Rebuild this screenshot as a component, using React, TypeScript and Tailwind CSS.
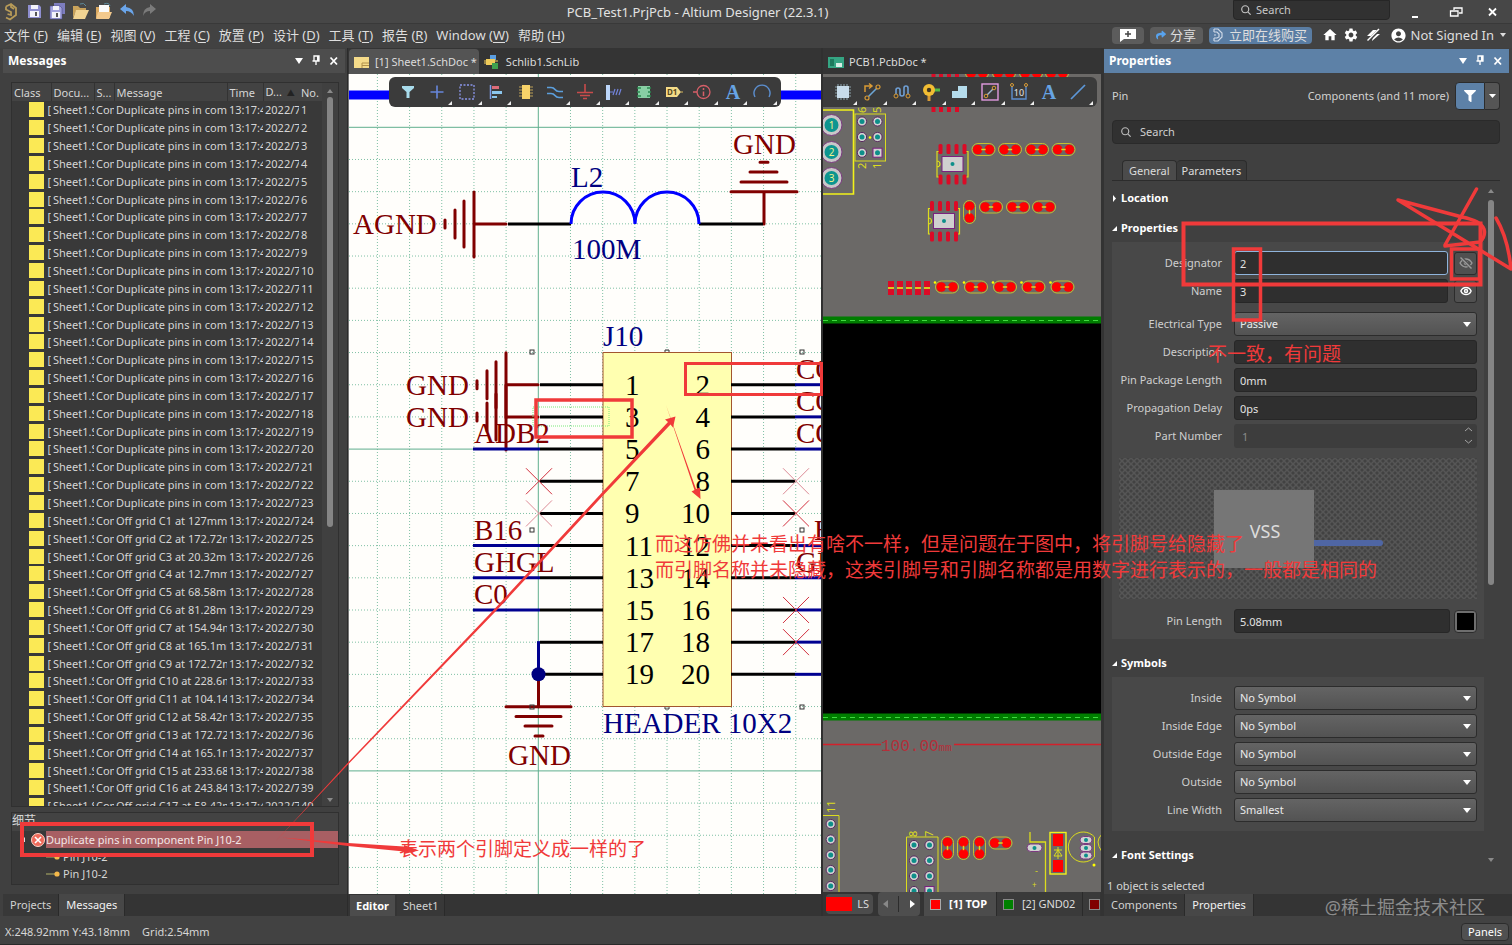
import React from "react";
import { MdHome, MdSettings, MdAccountCircle } from "react-icons/md";
import { IoSearch } from "react-icons/io5";
import { FaFilter, FaShare } from "react-icons/fa";
import { Eye } from "lucide-react";

type Message = { text: string; no: number };

const offGrid = [
  "C1 at 127mm", "C2 at 172.72mm", "C3 at 20.32mm", "C4 at 12.7mm", "C5 at 68.58mm", "C6 at 81.28mm",
  "C7 at 154.94mm", "C8 at 165.1mm", "C9 at 172.72mm", "C10 at 228.6mm", "C11 at 104.14mm", "C12 at 58.42mm",
  "C13 at 172.72mm", "C14 at 165.1mm", "C15 at 233.68mm", "C16 at 243.84mm", "C17 at 58.42mm",
];

const messages: Message[] = [
  ...Array.from({ length: 23 }, (_, i) => ({ text: "Duplicate pins in component", no: i + 1 })),
  ...offGrid.map((t, i) => ({ text: `Off grid ${t}`, no: i + 24 })),
];

/* ---------- title bar ---------- */

function TitleIcons() {
  return (
    <svg width="170" height="23" viewBox="0 0 170 23" aria-hidden="true">
      <path d="M6 6.500l5-2.500 5 4v7l-6 4.500-4-2M6 6.500v3l5 2.500v3l-3.500-1M11 4v3l3 2" fill="none" stroke="#b79b58" strokeWidth="1.800" />
      <g>
        <path d="M28 5h11l2 2v11H28z" fill="#8f8fd0" />
        <rect x="31" y="5" width="7" height="4" fill="#f2f2fa" />
        <rect x="30" y="11" width="9" height="6" fill="#f2f2fa" />
        <rect x="35" y="12" width="2" height="4" fill="#555" />
      </g>
      <g>
        <path d="M54 3h11v11H54z" fill="#7d7dbe" />
        <path d="M50 6h10l2 2v11H50z" fill="#a3a3de" stroke="#4b4b86" strokeWidth=".6" />
        <rect x="53" y="6" width="6" height="4" fill="#f2f2fa" />
        <rect x="52" y="12" width="8" height="6" fill="#f2f2fa" />
        <rect x="56" y="13" width="2" height="4" fill="#555" />
      </g>
      <path d="M73 6h5l2 2h6v3H76l-3 7z" fill="#c9a25a" />
      <path d="M76 10h13l-4 9H73z" fill="#f1d493" />
      <path d="M80 4q4-2 6 2" fill="none" stroke="#5c8a9c" />
      <path d="M96 7h14v11H96z" fill="#d9a860" />
      <path d="M99 5h10v9H99z" fill="#fafafa" />
      <path d="M98 12h14l-3 7H96z" fill="#f3c98c" />
      <path d="M104 4q5-2 6 2" fill="none" stroke="#5c8a9c" />
      <path d="M126 4l-6 5 6 5v-3q5 0 8 5 0-8-8-9z" fill="#6aa5ea" />
      <path d="M150 4l6 5-6 5v-3q-5 0-7 5 0-8 7-9z" fill="#7b7b7b" />
    </svg>
  );
}

function TitleBar() {
  return (
    <header className="flex h-[23px] items-start bg-[#474747]">
      <div className="w-[348px] shrink-0"><TitleIcons /></div>
      <h1 className="flex-1 pt-1 text-center text-[13px] leading-4 text-[#e2e2e2]">PCB_Test1.PrjPcb - Altium Designer (22.3.1)</h1>
      <div className="flex w-[465px] shrink-0 items-start">
        <label className="ml-[186px] flex h-5 w-[157px] items-center gap-1 rounded-b border border-[#262626] bg-[#313131] pl-1.5">
          <IoSearch className="size-3 text-[#c4c4c4]" />
          <input aria-label="Search commands" placeholder="Search" className="w-24 bg-transparent text-[11px] leading-4 outline-none placeholder:text-[#c8c8c8]" />
        </label>
        <div className="flex flex-1 justify-between pl-[22px] pr-3 pt-1">
          <button aria-label="Minimize" className="flex size-4 items-end pb-0.5"><span className="h-0.5 w-1.5 bg-white" /></button>
          <button aria-label="Restore" className="size-4">
            <svg viewBox="0 0 16 16" className="size-4" fill="none" stroke="#fff" strokeWidth="1.3"><path d="M6 6V4h8v5h-3M2.500 7h7.500v5H2.500z" /></svg>
          </button>
          <button aria-label="Close" className="size-4">
            <svg viewBox="0 0 16 16" className="size-4" stroke="#fff" strokeWidth="1.8"><path d="M5 4.500l7 7M12 4.500l-7 7" /></svg>
          </button>
        </div>
      </div>
    </header>
  );
}

const menus: [string, string][] = [
  ["文件", "F"], ["编辑", "E"], ["视图", "V"], ["工程", "C"], ["放置", "P"],
  ["设计", "D"], ["工具", "T"], ["报告", "R"], ["Window", "W"], ["帮助", "H"],
];

function MenuBar() {
  return (
    <nav className="flex h-[25px] items-center border-t border-[#393939] bg-[#424242] pb-0.5 pl-1 text-[13px] leading-5 text-[#dedede]">
      <div className="flex gap-[9px]">
        {menus.map(([name, key]) => (
          <button key={key} className="whitespace-nowrap">{name} (<u className="underline-offset-2">{key}</u>)</button>
        ))}
      </div>
      <div className="ml-auto flex items-center pr-1.5">
        <button aria-label="Comment" className="flex h-[17px] w-8 items-center justify-center rounded-sm bg-[#5c5c5c]">
          <svg width="18" height="14" viewBox="0 0 18 14"><path d="M1 1h16v10H5l-4 3z" fill="#fff" /><path d="M9 3v6M6 6h6" stroke="#444" strokeWidth="1.500" /></svg>
        </button>
        <button className="ml-1.5 flex h-[17px] w-[53px] items-center justify-center gap-1 rounded-sm bg-[#5c5c5c]"><FaShare className="size-2.5 text-[#58a3ee]" />分享</button>
        <button className="ml-1.5 flex h-[17px] w-[103px] items-center justify-center gap-1.5 rounded-sm bg-[#5a7da3]">
          <svg width="10" height="14" viewBox="0 0 10 14" fill="none" stroke="#cdd8e6" strokeWidth="1.200"><path d="M1 1h4l4 4v4l-4 4H1M1 4h3l2 2v3l-2 1H1M1 1v3M1 7h2M1 10v3" /></svg>
          立即在线购买
        </button>
        <MdHome className="ml-2.5 size-4 text-white" />
        <MdSettings className="ml-[5px] size-4 text-white" />
        <svg width="16" height="16" viewBox="0 0 16 16" className="ml-[7px]"><path d="M1 9l6-6h6l-3 4h4L6 14l1-5z" fill="#fff" /><path d="M2 14L14 2" stroke="#424242" strokeWidth="3" /><path d="M1.500 13.500L13 2" stroke="#fff" strokeWidth="1.500" /></svg>
        <MdAccountCircle className="ml-2 size-[17px] text-white" />
        <button className="ml-1 flex items-center gap-1.5">Not Signed In
          <svg width="6" height="4" viewBox="0 0 6 4"><path d="M0 0h6L3 4z" fill="#ddd" /></svg>
        </button>
      </div>
    </nav>
  );
}

/* ---------- shared panel parts ---------- */

function PanelHeader({ title, active }: { title: string; active?: boolean }) {
  return (
    <div className={`flex h-6 shrink-0 items-center pl-[5px] pr-1.5 text-xs font-bold leading-4 text-white ${active ? "bg-[#5d81a7]" : "bg-[#4d4d4d]"}`}>
      <h2>{title}</h2>
      <div className="ml-auto flex items-center gap-2">
        <button aria-label={`${title} menu`}><svg width="8" height="8" viewBox="0 0 8 8"><path d="M0 1h8L4 7z" fill="#fff" /></svg></button>
        <button aria-label={`Pin ${title}`}><svg width="10" height="12" viewBox="0 0 10 12"><path d="M3 1h5v5H3zM1.500 6h7M5 6v4" fill="none" stroke="#fff" strokeWidth="1.300" /><path d="M6 1h2v5H6z" fill="#fff" /></svg></button>
        <button aria-label={`Close ${title}`}><svg width="10" height="10" viewBox="0 0 10 10" stroke="#fff" strokeWidth="1.800"><path d="M1.500 1.500l6.500 7M8 1.500l-6.500 7" /></svg></button>
      </div>
    </div>
  );
}

function BottomTabs({ items }: { items: [string, boolean][] }) {
  return (
    <div className="flex h-[22px] shrink-0 bg-[#343434] text-[11px] leading-4">
      {items.map(([name, active]) => (
        <button key={name} className={`border-r border-[#2a2a2a] px-[7px] ${active ? "bg-[#474747] text-[#f2f2f2]" : "bg-[#383838] text-[#d2d2d2]"}`}>{name}</button>
      ))}
    </div>
  );
}

/* ---------- messages ---------- */

function MessagesPanel() {
  const cell = "overflow-hidden whitespace-nowrap p-0 pl-0.5 text-left font-normal";
  const head = `${cell} border-r border-[#333]`;
  return (
    <section className="flex w-[348px] shrink-0 flex-col border-r border-[#2b2b2b] bg-[#404040] pl-[3px] pt-px">
      <div className="mr-0.5 flex flex-col"><PanelHeader title="Messages" /></div>
      <div className="ml-2 mr-2 mt-[9px] flex h-[725px] shrink-0 overflow-hidden border border-[#303030] bg-[#393939] text-[11px] leading-[17px] text-[#d6d6d6]">
        <div className="flex-1 overflow-hidden">
          <table className="h-[732px] w-full table-fixed border-collapse">
            <colgroup>
              <col className="w-[39px]" /><col className="w-[43px]" /><col className="w-5" /><col className="w-[113px]" />
              <col className="w-9" /><col className="w-9" /><col />
            </colgroup>
            <thead>
              <tr className="bg-[#434343]">
                <th className={head}>Class</th>
                <th className={head}>Docu...</th>
                <th className={head}>S...</th>
                <th className={head}>Message</th>
                <th className={head}>Time</th>
                <th className={cell}>D... <span className="ml-0.5 text-[8px] text-[#222]">▲</span></th>
                <th className={cell}>No.</th>
              </tr>
            </thead>
            <tbody>
              {messages.map((m) => (
                <tr key={m.no}>
                  <td className={cell}>
                    <span className="flex items-center justify-end gap-[3px]"><i className="size-[15px] bg-[#fbe955]" />[</span>
                  </td>
                  <td className={cell}>Sheet1.S</td>
                  <td className={cell}>Com</td>
                  <td className={cell}>{m.text}</td>
                  <td className={cell}>13:17:4</td>
                  <td className={cell}>2022/7</td>
                  <td className={cell}>{m.no}</td>
                </tr>
              ))}
            </tbody>
          </table>
        </div>
        <div className="flex w-4 shrink-0 flex-col items-center bg-[#404040] pb-1 pt-1.5">
          <svg width="6" height="4" viewBox="0 0 6 4"><path d="M0 4h6L3 0z" fill="#8a8a8a" /></svg>
          <div className="mt-1 h-[430px] w-1.5 rounded-full bg-[#858585]" />
          <svg className="mt-auto" width="6" height="4" viewBox="0 0 6 4"><path d="M0 0h6L3 4z" fill="#8a8a8a" /></svg>
        </div>
      </div>
      <div className="ml-2 mr-2 mt-[5px] h-[73px] shrink-0 border border-[#303030] bg-[#393939] text-[11px] leading-[17px] text-[#d6d6d6]">
        <h3 className="h-[18px] bg-[#434343] text-xs">细节</h3>
        <ul>
          <li>
            <div className="flex">
              <span className="flex w-[34px] items-center gap-1.5 pl-2">
                <svg width="5" height="5" viewBox="0 0 5 5"><path d="M5 0v5H0z" fill="#ddd" /></svg>
                <svg width="14" height="14" viewBox="0 0 14 14"><circle cx="7" cy="7" r="6.500" fill="#ee6a5a" stroke="#ffd2c8" /><path d="M4 4l6 6M10 4l-6 6" stroke="#fff" strokeWidth="1.600" /></svg>
              </span>
              <span className="flex-1 bg-[#a85f63] text-[#f2e6e6]">Duplicate pins in component Pin J10-2</span>
            </div>
            <ul>
              {[1, 2].map((n) => (
                <li key={n} className="flex items-center gap-[3px] pl-[34px]">
                  <svg width="14" height="6" viewBox="0 0 14 6"><path d="M0 3h9" stroke="#8a8a58" strokeWidth="1.500" /><circle cx="11" cy="3" r="2.600" fill="#f5b84a" /></svg>
                  Pin J10-2
                </li>
              ))}
            </ul>
          </li>
        </ul>
      </div>
      <div className="mt-auto"><BottomTabs items={[["Projects", false], ["Messages", true]]} /></div>
    </section>
  );
}

/* ---------- floating tool bars ---------- */

function ToolButton({ label, corner, children }: { label: string; corner?: boolean; children: React.ReactNode }) {
  return (
    <button aria-label={label} className="relative flex h-[30px] flex-1 items-center justify-center">
      <svg width="20" height="20" viewBox="0 0 20 20" fill="none">{children}</svg>
      {corner && <svg className="absolute bottom-0.5 right-0" width="4" height="4" viewBox="0 0 4 4"><path d="M4 0v4H0z" fill="#eee" /></svg>}
    </button>
  );
}

function SchematicTools() {
  return (
    <div className="absolute left-10 top-[3px] flex h-[30px] w-[392px] rounded-md bg-[#3b3b3b] px-1">
      <ToolButton label="Filter"><path d="M4 4h12v2l-4.500 4v6h-3v-6L4 6z" fill="#a9dcec" /></ToolButton>
      <ToolButton label="Move" corner><path d="M10 3.500v13M3.500 10h13" stroke="#6787dc" strokeWidth="1.600" /></ToolButton>
      <ToolButton label="Select area" corner><rect x="3" y="3" width="14" height="14" stroke="#8b96ea" strokeWidth="1.300" strokeDasharray="2 1.500" /></ToolButton>
      <ToolButton label="Align" corner><path d="M4.500 3v14" stroke="#7d9ce8" strokeWidth="1.500" /><rect x="6" y="4" width="7" height="3" fill="#dd6b78" /><rect x="6" y="9" width="10" height="3" fill="#8bc6ee" /><rect x="6" y="14" width="5" height="2" fill="#8bc6ee" /></ToolButton>
      <ToolButton label="Place part"><path d="M3 5h14M3 8h14M3 11h14M3 14h14" stroke="#bba057" strokeWidth="1.200" /><rect x="6" y="3" width="8" height="14" fill="#f7d269" /></ToolButton>
      <ToolButton label="Wire" corner><path d="M2 5.500h4q2.500 0 4 2t4 2h4M2 11.500h4q2.500 0 4 2t4 2h4" stroke="#5c9fdc" strokeWidth="1.700" /></ToolButton>
      <ToolButton label="Power port" corner><path d="M10 2v8M2 10.500h16M5 13.500h10M8 16.500h4" stroke="#c84b4b" strokeWidth="1.600" /></ToolButton>
      <ToolButton label="Harness" corner><rect x="2" y="3" width="4" height="15" fill="#bcd6fa" /><path d="M6 10h3M9 13l2-6M12 13l2-6M15 13l2-6" stroke="#7384dd" strokeWidth="1.200" /></ToolButton>
      <ToolButton label="Sheet symbol" corner><rect x="4" y="4" width="12" height="12" fill="#88cfa4" /><path d="M3 6h4M3 10h3M3 14h4M13 6h4M14 10h3M13 14h4" stroke="#2b8a50" strokeWidth="1.500" /></ToolButton>
      <ToolButton label="Port" corner><path d="M2 5h11l4 5-4 5H2z" fill="#f5dc88" /><text x="3" y="13" fontSize="8" fontWeight="bold" fill="#5a4a1c">D1</text><path d="M17 10h2" stroke="#d8b95c" /></ToolButton>
      <ToolButton label="Directive" corner><circle cx="10.500" cy="10" r="6.500" stroke="#d65f68" strokeWidth="1.300" /><path d="M0 10h4M10.500 6v2M10.500 9.500V14" stroke="#d65f68" strokeWidth="1.500" /></ToolButton>
      <ToolButton label="Text" corner><text x="10" y="17" textAnchor="middle" fontFamily="Liberation Serif" fontWeight="bold" fontSize="20" fill="#67a4e4">A</text></ToolButton>
      <ToolButton label="Arc" corner><path d="M3 15A8 8 0 1 1 17 15" stroke="#5c8fd0" strokeWidth="1.400" /></ToolButton>
    </div>
  );
}

function PcbTools() {
  return (
    <div className="absolute left-0 top-[3px] flex h-[30px] w-[274px] rounded-r-md bg-[#3b3b3b] pl-[5px] pr-1">
      <ToolButton label="Place component" corner><path d="M5 2v16M8 2v16M11 2v16M14 2v16M2 5h16M2 8h16M2 11h16M2 14h16" stroke="#8aa0a8" strokeWidth="1.100" /><rect x="4" y="4" width="12" height="12" fill="#c8dcea" /></ToolButton>
      <ToolButton label="Route" corner><path d="M3 10V4h6M7 1.500L10 4 7 6.500" stroke="#d99b35" strokeWidth="1.500" /><path d="M6.500 14.500l8-8" stroke="#6da6d6" strokeWidth="1.600" /><circle cx="5" cy="16" r="2" stroke="#d99b35" strokeWidth="1.200" /><circle cx="16" cy="5" r="2" stroke="#d99b35" strokeWidth="1.200" /></ToolButton>
      <ToolButton label="Tune length" corner><path d="M4 12V8a2 2 0 0 1 4 0v4a2 2 0 0 0 4 0V6a2 2 0 0 1 4 0v6" stroke="#6f9fd4" strokeWidth="1.600" /><circle cx="4" cy="14" r="2" stroke="#d99b35" /><circle cx="16" cy="14" r="2" stroke="#d99b35" /></ToolButton>
      <ToolButton label="Place via" corner><path d="M11 8h8" stroke="#55bb44" strokeWidth="3" /><path d="M8 11v8" stroke="#d99b35" strokeWidth="3" /><circle cx="8" cy="8" r="6" fill="#f2bd33" /><circle cx="8" cy="8" r="2.200" fill="#443820" /></ToolButton>
      <ToolButton label="Polygon" corner><path d="M2 9h6V4h9v12H2z" fill="#b5dcec" /></ToolButton>
      <ToolButton label="Keep-out" corner><rect x="2" y="2" width="16" height="16" stroke="#e29be0" strokeWidth="1.400" /><path d="M7 13l6-6" stroke="#9fb5d0" strokeWidth="1.500" /><circle cx="6" cy="14" r="1.800" stroke="#d99b35" /><circle cx="14" cy="6" r="1.800" stroke="#d99b35" /></ToolButton>
      <ToolButton label="Dimension" corner><path d="M3 4v13h14V4" stroke="#5d8fd0" strokeWidth="1.400" /><circle cx="3" cy="3" r="1.500" stroke="#d99b35" /><circle cx="17" cy="3" r="1.500" stroke="#d99b35" /><text x="10" y="14" textAnchor="middle" fontSize="9" fill="#e6e6e6">10</text></ToolButton>
      <ToolButton label="String"><text x="10" y="17" textAnchor="middle" fontFamily="Liberation Serif" fontWeight="bold" fontSize="20" fill="#67a4e4">A</text></ToolButton>
      <ToolButton label="Line" corner><path d="M3 17L17 3" stroke="#5d97d8" strokeWidth="1.700" /></ToolButton>
    </div>
  );
}

/* ---------- schematic ---------- */

const GX = 538.3, GY = 127.3, STEP = 32.18;
const rowY = (i: number) => 384.7 + STEP * i;

function Cross({ x, y, faint }: { x: number; y: number; faint?: boolean }) {
  return <path d={`M${x - 13} ${y - 13}l26 26M${x + 13} ${y - 13}l-26 26`} stroke={faint ? "#dc8b96" : "#d2303e"} strokeWidth="1" />;
}

function SideGround({ x, y }: { x: number; y: number }) {
  return <path d={`M${x} ${y - 32}v65M${x - 10} ${y - 23}v46M${x - 19} ${y - 14}v28M${x - 29} ${y - 4}v8M${x} ${y}h32`} stroke="#800000" strokeWidth="3" strokeLinecap="round" />;
}

function SchematicDrawing() {
  const cols = Array.from({ length: 60 }, (_, i) => i - 6);
  const rows = Array.from({ length: 60 }, (_, i) => i - 2);
  const netsRight: [string, number, number][] = [["CO", 796, 0], ["CO", 796, 1], ["CO", 796, 2], ["B1", 814, 5], ["GH", 796, 6]];
  return (
    <svg className="block size-full bg-[#fffefb]" aria-label="Schematic sheet">
      <g transform="translate(-349 -74)" fill="none">
        {cols.map((i) => (
          <path key={`c${i}`} d={`M${GX + STEP * i} 74V2000`} stroke={i % 10 === 0 ? "#5fae8e" : "#7fc0a4"} strokeDasharray={i % 10 === 0 ? undefined : "1 2"} />
        ))}
        {rows.map((i) => (
          <path key={`r${i}`} d={`M349 ${GY + STEP * i}H2400`} stroke={i % 10 === 0 ? "#5fae8e" : "#7fc0a4"} strokeDasharray={i % 10 === 0 ? undefined : "1 2"} />
        ))}
        <path d="M349 95H2400" stroke="#0000ff" strokeWidth="9" />
        <SideGround x={474} y={224} />
        <path d="M764 224v-32M731 191.700h66M741 182h46M750 172h27M760 162.300h8" stroke="#800000" strokeWidth="3" strokeLinecap="round" />
        <path d="M508 224h63M699 224h64" stroke="#000" strokeWidth="3" />
        <path d="M571 224a32 32 0 0 1 64 0a32 32 0 0 1 64 0" stroke="#0000ff" strokeWidth="3" />
        <rect x="603" y="352.500" width="128.500" height="354" fill="#ffffb0" stroke="#a2552f" />
        <SideGround x={506} y={rowY(0)} />
        <SideGround x={506} y={rowY(1)} />
        {Array.from({ length: 10 }, (_, i) => (
          <path key={i} d={`M540 ${rowY(i)}h63M731 ${rowY(i)}h64`} stroke="#000" strokeWidth="3" />
        ))}
        {[2, 5, 6, 7].map((i) => <path key={i} d={`M473 ${rowY(i)}h67`} stroke="#000090" strokeWidth="3" />)}
        {[0, 1, 2, 5, 6, 7, 8, 9].map((i) => <path key={i} d={`M795 ${rowY(i)}h26`} stroke="#000090" strokeWidth="3" />)}
        <path d={`M538.500 ${rowY(8) - 1}V${rowY(9)}`} stroke="#000090" strokeWidth="3" />
        <path d="M538.500 680v27M506 706.700h65M516 716.500h45M525 726h27M535 736h8" stroke="#800000" strokeWidth="3" strokeLinecap="round" />
        <circle cx="538.500" cy={rowY(9)} r="7" fill="#000080" />
        <Cross x={539} y={rowY(3)} /><Cross x={539} y={rowY(4)} faint />
        <Cross x={796} y={rowY(3)} faint /><Cross x={796} y={rowY(4)} />
        <Cross x={796} y={rowY(7)} /><Cross x={796} y={rowY(8)} />
        {[[532, 352], [802, 352], [532, 530], [802, 530], [532, 707], [802, 707]].map(([x, y]) => (
          <rect key={`${x}-${y}`} x={x - 2} y={y - 2} width="4" height="4" stroke="#333" />
        ))}
        <path d="M665 352v-2h4v2M665 707v2h4v-2" stroke="#333" />
        <rect x="533" y="407" width="76" height="19" stroke="#7bea7b" strokeDasharray="1 1" />
        <g fontFamily="Liberation Serif" fontSize="29">
          <g fill="#800000">
            <text x="353" y="234">AGND</text>
            <text x="733" y="154">GND</text>
            <text x="406" y="395">GND</text>
            <text x="406" y="427">GND</text>
            <text x="474" y="443">ADB2</text>
            <text x="474" y="540">B16</text>
            <text x="474" y="572">GHGL</text>
            <text x="474" y="604">C0</text>
            <text x="508" y="765">GND</text>
            {netsRight.map(([t, x, i]) => <text key={i} x={x} y={rowY(i) - 6}>{t}</text>)}
          </g>
          <g fill="#000080">
            <text x="571" y="187">L2</text>
            <text x="572" y="259">100M</text>
            <text x="603" y="346">J10</text>
            <text x="603" y="733">HEADER 10X2</text>
          </g>
          <g fill="#000">
            {Array.from({ length: 10 }, (_, i) => (
              <g key={i}>
                <text x="625" y={rowY(i) + 10}>{2 * i + 1}</text>
                <text x="710" y={rowY(i) + 10} textAnchor="end">{2 * i + 2}</text>
              </g>
            ))}
          </g>
        </g>
      </g>
    </svg>
  );
}

function DocTab({ active, label, children }: { active?: boolean; label: string; children: React.ReactNode }) {
  return (
    <button className={`flex h-[25px] items-center gap-1 whitespace-nowrap rounded-t pl-1 pr-0.5 text-[11px] leading-4 text-[#dcdcdc] ${active ? "bg-[#545454]" : ""}`}>
      <svg width="18" height="16" viewBox="0 0 18 16">{children}</svg>
      {label}
    </button>
  );
}

function SchematicPane() {
  return (
    <section className="flex min-w-0 flex-1 flex-col border-r-2 border-[#303030]">
      <div className="flex h-[26px] shrink-0 items-end gap-px bg-[#343434] pl-px">
        <DocTab active label="[1] Sheet1.SchDoc *"><path d="M1 3h15v11H1z" fill="#f5db8a" /><path d="M9 9h7M9 11.500h7M9 9v5" stroke="#b0904a" /></DocTab>
        <DocTab label="Schlib1.SchLib"><path d="M6 1h6v5H6z" fill="#5a9de0" /><path d="M2 5h9v6H2z" fill="#f0cb5a" /><path d="M8 9h6v6H8z" fill="#3fa04e" /><path d="M0 7h2M0 9h2M11 7h3" stroke="#f0cb5a" /></DocTab>
      </div>
      <div className="relative min-h-0 flex-1 overflow-hidden border-l border-[#777]">
        <SchematicDrawing />
        <SchematicTools />
      </div>
      <div className="flex h-[22px] shrink-0 bg-[#343434] pl-0.5 pt-px text-[11px] leading-4">
        <button className="mr-0.5 bg-[#4c4c4c] px-1.5 font-bold text-white">Editor</button>
        <button className="border-r border-[#2a2a2a] bg-[#383838] px-1.5 text-[#d2d2d2]">Sheet1</button>
      </div>
    </section>
  );
}

/* ---------- board ---------- */

const YEL = "#dcdc1e";

function Chip({ x, y, vertical }: { x: number; y: number; vertical?: boolean }) {
  return (
    <g transform={`translate(${x} ${y}) rotate(${vertical ? 90 : 0})`}>
      <rect x="-11.500" y="-6" width="23" height="12" rx="6" stroke="#cfc82c" strokeWidth=".9" />
      <ellipse cx="-5.800" rx="4.800" ry="4.800" fill="#ff0000" />
      <ellipse cx="5.800" rx="4.800" ry="4.800" fill="#ff0000" />
      <path d="M-2.200 0h4.400" stroke={YEL} strokeWidth="1.500" />
    </g>
  );
}

function Ic({ x, y }: { x: number; y: number }) {
  return (
    <g transform={`translate(${x} ${y})`}>
      {[-12, -4, 4, 12].map((d) => (
        <g key={d} fill="#dc0a26"><rect x={d - 2} y="-20" width="4" height="10" rx="1.500" /><rect x={d - 2} y="10.500" width="4" height="10" rx="1.500" /></g>
      ))}
      <path d="M-14 -12.500h-1.500v25.500h1.500M14 -12.500h1.500v25.500h-1.500M-15.500 -3a3 3 0 0 1 0 6" stroke={YEL} strokeWidth="1.200" />
      <rect x="-10.500" y="-7.500" width="21" height="15" fill="#cfcfcf" stroke="#7b2080" />
      <circle r="2" fill="#0d8f8a" />
    </g>
  );
}

function Pad({ x, y, square }: { x: number; y: number; square?: boolean }) {
  return (
    <g transform={`translate(${x} ${y})`}>
      {square ? <rect x="-4.500" y="-4.500" width="9" height="9" fill="#d2d2d2" stroke="#7b2080" /> : <circle r="4.600" fill="#d2d2d2" stroke="#5a2a60" />}
      <circle r="2.500" fill="#0d8f8a" />
    </g>
  );
}

function BoardDrawing() {
  return (
    <svg className="block size-full bg-[#6b6967]" aria-label="Board layout">
      <g transform="translate(-823 -74)" fill="none">
        {[977, 1004, 1031, 1057].map((x) => <Chip key={x} x={x} y={73} />)}
        {[933.500, 941, 949, 957].map((x) => <path key={x} d={`M${x} 70v8M${x} 104v8`} stroke="#dc0a26" strokeWidth="4" />)}
        <path d="M820 110h33.500v84H820" stroke="#f2f21a" strokeWidth="1.600" />
        {[[125, "1"], [152, "2"], [178, "3"]].map(([y, n]) => (
          <g key={n}>
            <circle cx="831.500" cy={y} r="10.500" fill="#c8c8c8" stroke="#7b3a80" />
            <circle cx="831.500" cy={y} r="7" fill="#0d9590" />
            <text x="831.500" y={Number(y) + 4} textAnchor="middle" fontSize="10" fill="#f2f28a">{n}</text>
          </g>
        ))}
        <rect x="855" y="114" width="30.500" height="47" stroke={YEL} />
        {[121.500, 137, 152.700].map((y) => <Pad key={y} x={862} y={y} />)}
        <Pad x={877.500} y={121.500} /><Pad x={877.500} y={137} /><Pad x={877.500} y={152.700} square />
        <circle cx="870" cy="137.500" r="1.300" fill="#ffff00" />
        <g fill={YEL} fontSize="11">
          <text transform="translate(866 169) rotate(-90)">2</text>
          <text transform="translate(881 169) rotate(-90)">1</text>
          <text transform="translate(866 113) rotate(-90)">6</text>
          <text transform="translate(881 113) rotate(-90)">5</text>
          <text transform="translate(835 813) rotate(-90)">11</text>
          <text transform="translate(917 837) rotate(-90)">8</text>
          <text transform="translate(933 837) rotate(-90)">7</text>
          <text x="1032" y="888" fontSize="8">+</text>
          <text x="1035" y="874" fontSize="9">-</text>
        </g>
        <Ic x={952.500} y={164} /><Ic x={944} y={221} />
        {[983.500, 1010, 1037, 1063.500].map((x) => <Chip key={x} x={x} y={149.500} />)}
        {[991, 1018, 1044].map((x) => <Chip key={x} x={x} y={207} />)}
        <Chip x={969.500} y={212} vertical />
        {[891, 900, 909, 918, 927].map((x) => (
          <g key={x}><rect x={x - 3} y="281" width="6" height="14" fill="#dc0a26" /><path d={`M${x - 3} 288h6`} stroke={YEL} strokeWidth="1.800" /></g>
        ))}
        {[947, 976, 1005, 1033.500, 1062.500].map((x) => (
          <g key={x}><Chip x={x} y={287} /><circle cx={x - 12} cy="282.500" r="1.300" fill="#ffff00" /></g>
        ))}
        <rect x="823" y="320" width="1200" height="397" fill="#000" />
        <path d="M823 320h1200M823 717h1200" stroke="#007d00" strokeWidth="7" />
        <path d="M823 320.500h1200M823 717.500h1200" stroke="#3fd83f" strokeDasharray="5 4" />
        <path d="M823 744.500h58M954 744.500h1200" stroke="#d3202b" strokeWidth="1.500" />
        <text x="881" y="751" fontFamily="Liberation Mono" fontSize="16" fill="#b3303a">100.00<tspan fontSize="11">mm</tspan></text>
        <path d="M823 815.500h16V900M906.500 900v-63h31.500V900" stroke={YEL} />
        {[824, 839.500, 855, 870, 886].map((y) => <Pad key={y} x={830.700} y={y} />)}
        {[845, 860.500, 876, 891].map((y) => <g key={y}><Pad x={914} y={y} /><Pad x={929.500} y={y} square={y === 891} /></g>)}
        {[947.500, 963.500, 979.500].map((x) => <Chip key={x} x={x} y={848} vertical />)}
        <Chip x={1000.500} y={843} />
        <path d="M1030 832v10h15.500v58" stroke={YEL} strokeWidth="1.300" />
        <rect x="1027" y="844" width="15" height="7.500" rx="3.700" fill="#d2d2d2" stroke="#7b3a80" /><circle cx="1034.500" cy="848" r="2" fill="#0d8f8a" />
        <rect x="1050" y="832.500" width="16" height="41.500" stroke="#f2f21a" strokeWidth="1.400" />
        <path d="M1053 834h10v12h-10zM1053 860h10v12h-10z" fill="#ff0000" />
        <path d="M1058 847v12M1054 850h8M1058 850l-4 6h8z" stroke={YEL} />
        <path d="M1094.500 837v20a15 15 0 1 1 0-20z" stroke={YEL} />
        {[840, 848, 855.500].map((y) => <g key={y}><rect x="1080" y={y - 3.500} width="12" height="7" rx="3.500" fill="#d2d2d2" stroke="#7b3a80" /><circle cx="1086" cy={y} r="2" fill="#0d8f8a" /></g>)}
        <circle cx="1094" cy="865" r="1.500" fill="#ffff00" />
        <path d="M1102 834q-4 4-4 8t4 10" stroke={YEL} />
      </g>
    </svg>
  );
}

function BoardPane() {
  return (
    <section className="flex w-[278px] shrink-0 flex-col">
      <div className="flex h-[26px] shrink-0 items-end bg-[#343434]">
        <DocTab label="PCB1.PcbDoc *"><path d="M1 3h16v11H1z" fill="#35a583" /><path d="M3 5h4v7H3z" fill="#1c7a5d" /><path d="M9 9h6v4H9z" fill="#d8eee6" /></DocTab>
      </div>
      <div className="relative min-h-0 flex-1 overflow-hidden">
        <BoardDrawing />
        <PcbTools />
      </div>
      <div className="flex h-6 shrink-0 overflow-hidden bg-[#343434] text-[11px] leading-4 text-[#dcdcdc]">
        <button className="my-0.5 ml-[3px] flex w-[47px] items-center justify-between rounded bg-[#4c4c4c] pr-1"><span className="h-[14px] w-[26px] bg-[#ff0000]" />LS</button>
        <div className="ml-[5px] mr-1 flex w-[42px] items-center justify-around rounded bg-[#4e4e4e]">
          <button aria-label="Previous layer"><svg width="5" height="8" viewBox="0 0 5 8"><path d="M5 0v8L0 4z" fill="#888" /></svg></button>
          <span className="h-4 w-px bg-[#2c2c2c]" />
          <button aria-label="Next layer"><svg width="5" height="8" viewBox="0 0 5 8"><path d="M0 0v8l5-4z" fill="#fff" /></svg></button>
        </div>
        <button className="flex w-[72px] shrink-0 items-center gap-2 whitespace-nowrap bg-[#4c4c4c] pl-1.5 font-bold text-white"><i className="size-[11px] border border-[#aaa] bg-[#ff0000]" />[1] TOP</button>
        <button className="flex w-[87px] shrink-0 items-center gap-2 whitespace-nowrap border-x border-[#2a2a2a] bg-[#3a3a3a] pl-1.5"><i className="size-[11px] border border-[#888] bg-[#008000]" />[2] GND02</button>
        <button aria-label="Next layer tab" className="flex items-center bg-[#3a3a3a] pl-1.5"><i className="size-[11px] border border-[#888] bg-[#800000]" /></button>
      </div>
    </section>
  );
}

/* ---------- properties ---------- */

const boxCls = "h-6 min-w-0 flex-1 rounded-[3px] border bg-[#2f2f2f] px-[5px] text-[11px] leading-4 text-[#e2e2e2] outline-none";

function Field({ label, id, children }: { label: string; id: string; children: React.ReactNode }) {
  return (
    <div className="flex h-6 items-center">
      <label htmlFor={id} className="w-[110px] shrink-0 text-right text-[11px] leading-4 text-[#cfcfcf]">{label}</label>
      <div className="ml-3 flex min-w-0 flex-1 items-center">{children}</div>
    </div>
  );
}

function Dropdown({ label, value }: { label: string; value: string }) {
  const id = label.toLowerCase().replace(/ /g, "-");
  return (
    <Field label={label} id={id}>
      <div className="relative flex-1">
        <select id={id} defaultValue={value} className="block h-6 w-full appearance-none rounded-[3px] border border-[#2c2c2c] bg-gradient-to-b from-[#646464] to-[#535353] px-[5px] text-[11px] leading-4 text-[#ebebeb] outline-none">
          <option>{value}</option>
        </select>
        <svg className="pointer-events-none absolute right-1.5 top-2.5" width="8" height="5" viewBox="0 0 8 5"><path d="M0 0h8L4 5z" fill="#fff" /></svg>
      </div>
    </Field>
  );
}

function Heading({ title, open }: { title: string; open?: boolean }) {
  return (
    <h3 className="flex h-[18px] items-center gap-1 text-[11px] font-bold leading-4 text-white">
      <svg width="5" height="7" viewBox="0 0 5 7"><path d={open ? "M5 1v5H0z" : "M1 0l3 3.500L1 7z"} fill="#fff" /></svg>
      {title}
    </h3>
  );
}

function PinPreview() {
  return (
    <svg className="mx-[7px] mt-[10px] h-[141px] w-[358px]" aria-label="Pin preview">
      <defs>
        <pattern id="hatch" width="6" height="6" patternUnits="userSpaceOnUse">
          <rect width="6" height="6" fill="#424242" />
          <path d="M-1 -1l8 8M7 -1l-8 8" stroke="#565656" strokeWidth="1.500" />
        </pattern>
      </defs>
      <rect width="100%" height="100%" fill="url(#hatch)" />
      <rect x="95" y="32" width="100" height="78" fill="#767676" />
      <path d="M195 85h66" stroke="#4f66a4" strokeWidth="6" />
      <circle cx="261" cy="85" r="3" fill="#4f66a4" />
      <text x="146" y="80" textAnchor="middle" fontSize="18" fill="#dcdcdc">VSS</text>
    </svg>
  );
}

function PropertiesPanel() {
  return (
    <section className="flex w-[411px] shrink-0 flex-col border-l-[3px] border-[#333] bg-[#404040] pt-px">
      <div className="mr-[3px] flex flex-col"><PanelHeader title="Properties" active /></div>
      <div className="mr-3 mt-[9px] flex h-7 shrink-0 items-center pl-2 text-[11px] leading-4 text-[#d2d2d2]">
        Pin
        <span className="ml-auto mr-1.5">Components (and 11 more)</span>
        <button aria-label="Filter objects" className="flex h-7 w-[30px] items-center justify-center rounded-l border border-[#2c2c2c] bg-[#5d81a7]"><FaFilter className="size-3 text-white" /></button>
        <button aria-label="Filter options" className="flex h-7 w-[15px] items-center justify-center rounded-r border border-l-0 border-[#2c2c2c] bg-[#555]"><svg width="7" height="4" viewBox="0 0 7 4"><path d="M0 0h7L3.500 4z" fill="#fff" /></svg></button>
      </div>
      <label className="ml-2 mr-3 mt-[10px] flex h-6 shrink-0 items-center gap-2 rounded border border-[#2a2a2a] bg-[#313131] pl-[7px]">
        <IoSearch className="size-3 text-[#bbb]" />
        <input aria-label="Search properties" placeholder="Search" className="flex-1 bg-transparent text-[11px] leading-4 outline-none placeholder:text-[#cfcfcf]" />
      </label>
      <div className="ml-2 mr-3 mt-4 flex h-[21px] shrink-0 border-b border-[#2c2c2c] pl-2.5 text-[11px] leading-4 text-[#dcdcdc]">
        <button className="rounded-t border border-b-0 border-[#2c2c2c] bg-[#4b4b4b] px-1.5">General</button>
        <button className="rounded-t border border-b-0 border-l-0 border-[#2c2c2c] bg-[#3a3a3a] px-[5px]">Parameters</button>
      </div>
      <div className="flex min-h-0 flex-1">
        <div className="ml-2 w-[372px] shrink-0 pt-2">
          <Heading title="Location" />
          <div className="mt-3"><Heading title="Properties" open /></div>
          <div className="mt-[5px] bg-[#484848] pb-1.5 pt-[9px]">
            <div className="flex flex-col gap-1 pr-[7px]">
              <Field label="Designator" id="designator">
                <input id="designator" defaultValue="2" className={`${boxCls} mr-1.5 border-[#8fb4dc]`} />
                <button aria-label="Show designator" className="flex size-[23px] items-center justify-center rounded-[3px] border border-[#2c2c2c] bg-[#505050]">
                  <svg width="14" height="14" viewBox="0 0 14 14" fill="none" stroke="#9a9a9a"><path d="M1 7q2.500-4 6-4t6 4q-2.500 4-6 4T1 7z" strokeWidth="1.400" /><circle cx="7" cy="7" r="1.800" fill="#9a9a9a" /><path d="M2 1l11 12" stroke="#505050" strokeWidth="3" /><path d="M1.500 1.500l11 11" strokeWidth="1.400" /></svg>
                </button>
              </Field>
              <Field label="Name" id="name">
                <input id="name" defaultValue="3" className={`${boxCls} mr-1.5 border-[#272727]`} />
                <button aria-label="Hide name" className="flex size-[23px] items-center justify-center rounded-[3px] border border-[#2c2c2c] bg-[#505050] text-white"><Eye className="size-3" strokeWidth={3} /></button>
              </Field>
            </div>
            <div className="mt-[9px] flex flex-col gap-1 pr-[7px]">
              <Dropdown label="Electrical Type" value="Passive" />
              <Field label="Description" id="description"><input id="description" className={`${boxCls} border-[#272727]`} /></Field>
              <Field label="Pin Package Length" id="ppl"><input id="ppl" defaultValue="0mm" className={`${boxCls} border-[#272727]`} /></Field>
              <Field label="Propagation Delay" id="delay"><input id="delay" defaultValue="0ps" className={`${boxCls} border-[#272727]`} /></Field>
              <Field label="Part Number" id="part">
                <div className="relative flex flex-1">
                  <input id="part" defaultValue="1" disabled className="h-6 min-w-0 flex-1 rounded-[3px] bg-[#3d3d3d] px-2 text-[11px] leading-4 text-[#8a8a8a]" />
                  <svg className="absolute right-1 top-0.5" width="9" height="20" viewBox="0 0 9 20" fill="none" stroke="#a5a5a5"><path d="M1 5l3.500-3L8 5M1 14l3.500 3L8 14" /></svg>
                </div>
              </Field>
            </div>
            <PinPreview />
            <div className="mt-[10px] pr-[7px]">
              <Field label="Pin Length" id="pinlen">
                <input id="pinlen" defaultValue="5.08mm" className={`${boxCls} mr-1 border-[#272727]`} />
                <button aria-label="Pin colour" className="size-[23px] rounded border border-[#2c2c2c] bg-[#6e6e6e] p-0.5"><span className="block size-full bg-black" /></button>
              </Field>
            </div>
          </div>
          <div className="mt-[15px]"><Heading title="Symbols" open /></div>
          <div className="mt-[5px] flex flex-col gap-1 bg-[#484848] pb-[9px] pr-[7px] pt-[9px]">
            <Dropdown label="Inside" value="No Symbol" />
            <Dropdown label="Inside Edge" value="No Symbol" />
            <Dropdown label="Outside Edge" value="No Symbol" />
            <Dropdown label="Outside" value="No Symbol" />
            <Dropdown label="Line Width" value="Smallest" />
          </div>
          <div className="mt-[15px]"><Heading title="Font Settings" open /></div>
        </div>
        <div className="ml-1 flex w-1.5 flex-col items-center pb-4 pt-2">
          <svg width="6" height="4" viewBox="0 0 6 4"><path d="M0 4h6L3 0z" fill="#8a8a8a" /></svg>
          <div className="mt-[7px] h-[385px] w-1.5 shrink-0 rounded-full bg-[#858585]" />
          <svg className="mt-auto" width="6" height="4" viewBox="0 0 6 4"><path d="M0 0h6L3 4z" fill="#8a8a8a" /></svg>
        </div>
      </div>
      <p className="shrink-0 pl-[3px] text-[11px] leading-4 text-[#d6d6d6]">1 object is selected</p>
      <BottomTabs items={[["Components", false], ["Properties", true]]} />
    </section>
  );
}

/* ---------- review marks drawn over the window ---------- */

function ReviewMarks() {
  return (
    <svg className="pointer-events-none absolute inset-0 size-full" fill="none" stroke="#f03a3a" aria-label="Review marks">
      <rect x="22" y="824" width="290" height="31" strokeWidth="4" />
      <rect x="685.500" y="363.500" width="136" height="31" strokeWidth="3" />
      <rect x="536" y="400" width="96" height="37" strokeWidth="3.500" />
      <rect x="1183.500" y="223.500" width="297" height="61" strokeWidth="4" />
      <rect x="1233.500" y="249" width="27" height="71" strokeWidth="3.500" />
      <rect x="1451.500" y="249" width="28" height="30" strokeWidth="3.500" />
      <path d="M1476.500 189L1445 245M1445 246L1480 242Q1486 236 1484 229Q1481 221 1462 217L1398 200L1511 269Q1508 238 1496 218" strokeWidth="3.500" strokeLinejoin="round" strokeLinecap="round" />
      <g fill="#f03a3a" stroke="none">
        <path d="M275 842L348 762.500 494 609.500 602 492.500 668 422 665 419.500 675.500 416.500 673 427.500 670.500 424.500 604 494.500 496 611 348.500 764z" />
        <path d="M666 405L696 489 700 487.500 700.500 499 691.500 491.500 694.500 490z" />
        <path d="M282 837.500L348 843 404 846.500 404 845 419 850.500 404 854 404 851.500 348 846z" />
        <g fontSize="19">
          <text x="399" y="856">表示两个引脚定义成一样的了</text>
          <text x="655" y="551">而这仿佛并未看出有啥不一样，但是问题在于图中，将引脚号给隐藏了</text>
          <text x="655" y="577">而引脚名称并未隐藏，这类引脚号和引脚名称都是用数字进行表示的，一般都是相同的</text>
          <text x="1208" y="361">不一致，有问题</text>
        </g>
      </g>
    </svg>
  );
}

export default function App() {
  return (
    <div className="relative flex h-screen flex-col overflow-hidden bg-[#404040] font-['Noto_Sans','Noto_Sans_CJK_SC',sans-serif]">
      <TitleBar />
      <MenuBar />
      <main className="flex min-h-0 flex-1 bg-[#343434]">
        <MessagesPanel />
        <SchematicPane />
        <BoardPane />
        <PropertiesPanel />
      </main>
      <footer className="flex h-[29px] shrink-0 items-center border-b border-[#2a2a2a] bg-[#424242] pl-[5px] pr-[3px] pt-1 text-[11px] leading-4 text-[#d6d6d6]">
        <span>X:248.92mm Y:43.18mm</span>
        <span className="ml-3">Grid:2.54mm</span>
        <button className="ml-auto rounded-sm border border-[#2c2c2c] bg-[#505050] px-1.5 text-white">Panels</button>
      </footer>
      <ReviewMarks />
      <p className="pointer-events-none absolute bottom-6 right-[27px] text-lg leading-7 text-[#8c8c8c]">@稀土掘金技术社区</p>
    </div>
  );
}
